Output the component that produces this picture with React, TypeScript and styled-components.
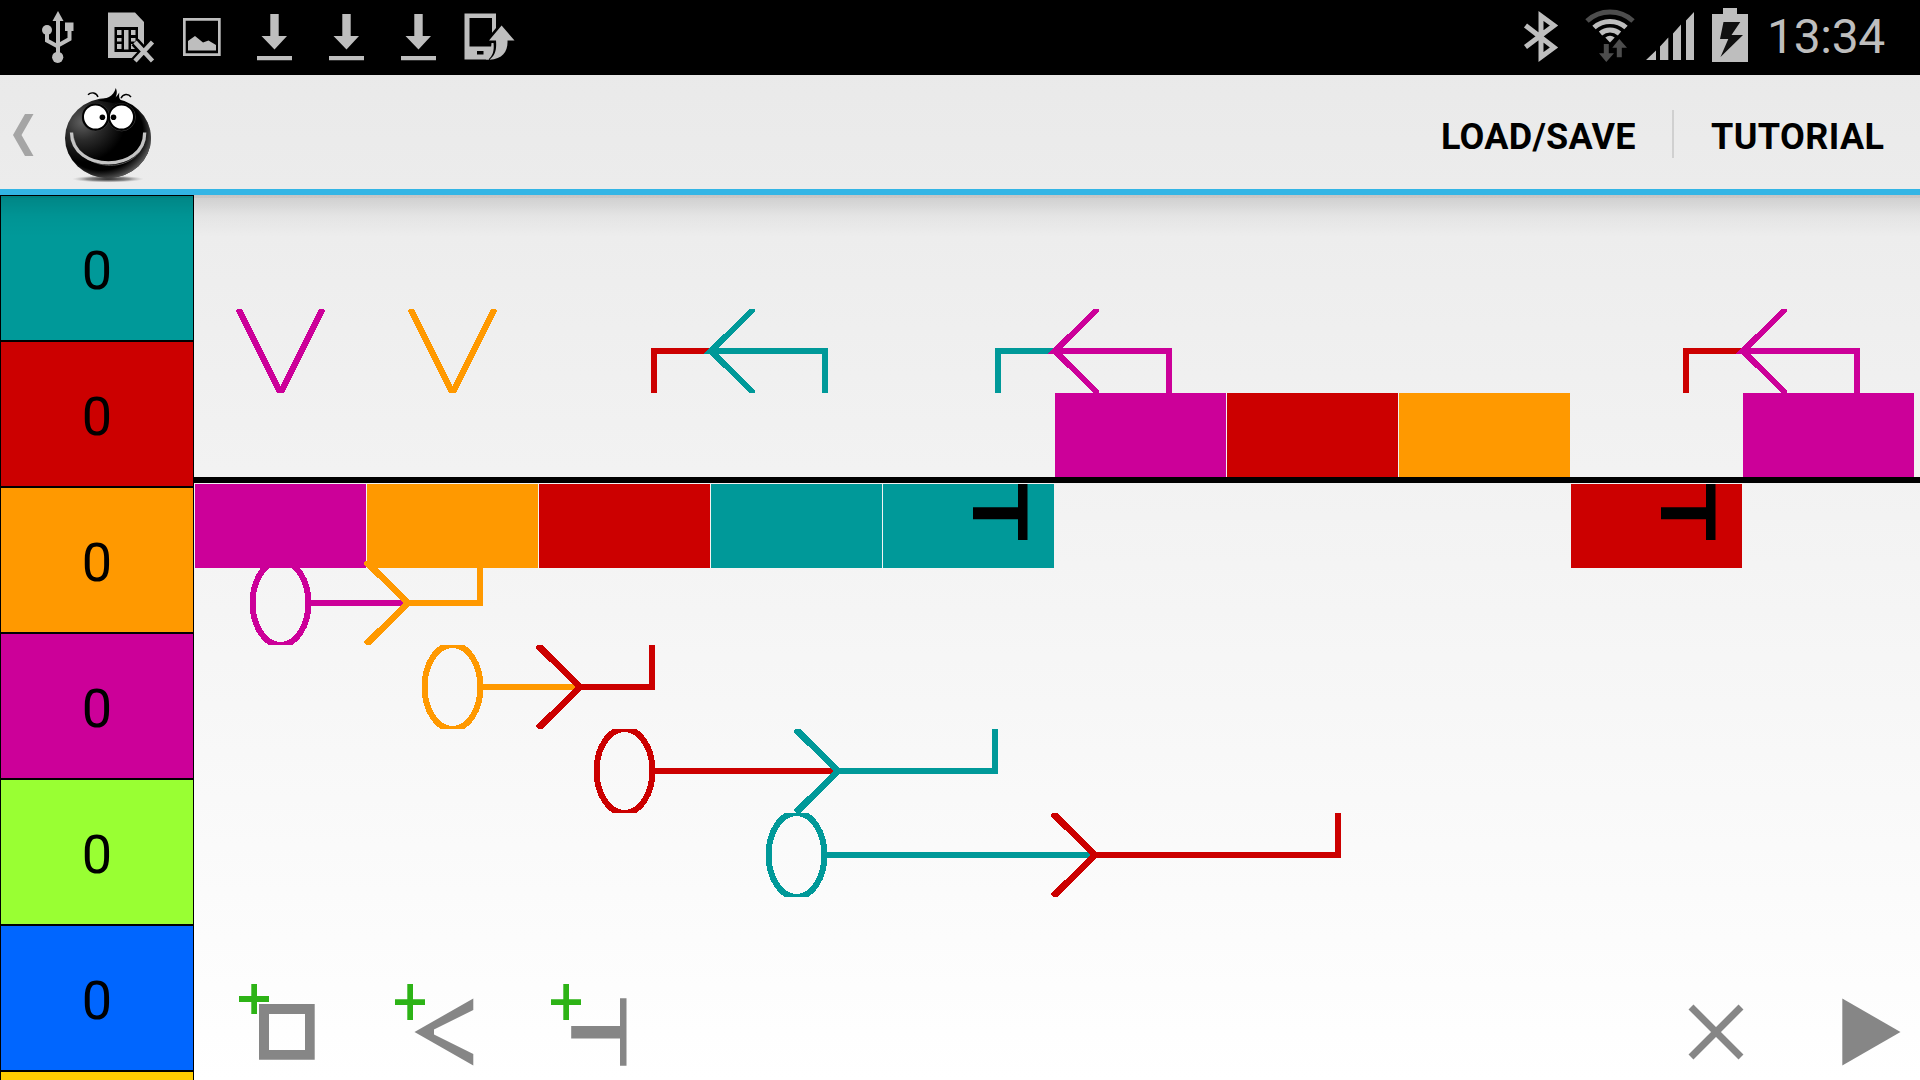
import React from "react";
import styled, { createGlobalStyle } from "styled-components";

const TEAL = "#009999";
const RED = "#cc0000";
const ORANGE = "#ff9900";
const MAGENTA = "#cc0099";
const LIME = "#99ff33";
const BLUE = "#0066ff";
const YELLOW = "#ffcc00";
const STATUS = "#bebebe";
const TOOL = "#868686";
const PLUS = "#2db316";

const GlobalStyle = createGlobalStyle`
  * { box-sizing: border-box; }
  body { margin: 0; overflow: hidden; }
  svg { display: block; flex: none; }
`;

const Screen = styled.div`
  width: 1920px;
  height: 1080px;
  display: flex;
  flex-direction: column;
  overflow: hidden;
  background: linear-gradient(#e8e8e8, #ffffff);
  font-family: Roboto, "Liberation Sans", sans-serif;
`;

const StatusBar = styled.header`
  height: 75px;
  flex: none;
  display: flex;
  justify-content: space-between;
  background: #000;
  color: ${STATUS};
`;

const StatusGroup = styled.div<{ $left?: number; $right?: number }>`
  display: flex;
  align-items: center;
  padding-left: ${(p) => p.$left ?? 0}px;
  padding-right: ${(p) => p.$right ?? 0}px;
`;

const Clock = styled.time`
  width: 120px;
  margin-left: 12px;
  font-size: 48px;
  line-height: 74px;
  height: 75px;
  white-space: nowrap;
  letter-spacing: -0.3px;
`;

const ActionBar = styled.nav`
  height: 120px;
  flex: none;
  display: flex;
  align-items: center;
  justify-content: space-between;
  border-bottom: 6px solid #33b5e5;
`;

const Home = styled.div`
  display: flex;
  height: 114px;
`;

const Menu = styled.div`
  display: flex;
  align-items: center;
  height: 114px;
  padding-bottom: 2px;
`;

const MenuItem = styled.button<{ $width: number; $track: number }>`
  width: ${(p) => p.$width}px;
  padding: 12px 0 0;
  border: 0;
  background: none;
  color: #000;
  font: 700 36px/48px Roboto, "Liberation Sans", sans-serif;
  letter-spacing: ${(p) => p.$track}px;
  text-align: left;
  white-space: nowrap;
`;

const Divider = styled.span`
  width: 2px;
  height: 48px;
  margin: 5px 37px 0 36px;
  background: #d0d0d0;
`;

const Body = styled.main`
  position: relative;
  flex: 1;
  min-height: 0;
  display: flex;
`;

const BarShadow = styled.div`
  position: absolute;
  inset: 0 0 auto 0;
  height: 42px;
  pointer-events: none;
  background:
    linear-gradient(rgba(0, 0, 0, 0.04), rgba(0, 0, 0, 0.04)) 0 0 / 100% 3px no-repeat,
    linear-gradient(rgba(0, 0, 0, 0.135), rgba(0, 0, 0, 0.035) 50%, transparent);
`;

const Palette = styled.aside`
  width: 194px;
  flex: none;
  overflow: hidden;
`;

const Swatch = styled.div<{ $color: string }>`
  height: 146px;
  display: flex;
  align-items: center;
  justify-content: center;
  padding-top: 5px;
  border: 1px solid #000;
  background: ${(p) => p.$color};
  color: #000;
  font-size: 54px;
  line-height: 64px;
`;

const Stage = styled.section`
  position: relative;
  flex: 1;
  display: flex;
  flex-direction: column;
  padding-top: 198px;
`;

const Track = styled.div`
  display: grid;
  grid-template-columns: repeat(10, 171px);
  column-gap: 1px;
  height: 84px;
  padding-left: 1px;
`;

const Block = styled.div<{ $col: number; $color: string }>`
  grid-column: ${(p) => p.$col};
  grid-row: 1;
  height: 84px;
  background: ${(p) => p.$color};
`;

const Axis = styled.div`
  height: 6px;
  margin-bottom: 1px;
  background: #000;
`;

const Connectors = styled.svg`
  position: absolute;
  left: 0;
  top: 0;
`;

const Toolbar = styled.footer`
  display: flex;
  justify-content: space-between;
  height: 96px;
  margin-top: auto;
  padding-left: 45px;
`;

const ToolGroup = styled.div`
  display: flex;
  gap: 60px;
`;

const Tool = styled.button`
  width: 96px;
  height: 96px;
  padding: 0;
  border: 0;
  background: none;
`;

const StatusIcon = ({ w = 72, children }: { w?: number; children: React.ReactNode }) => (
  <svg width={w} height={75} viewBox={`0 0 ${w} 75`} fill={STATUS}>
    {children}
  </svg>
);

const UsbIcon = () => (
  <StatusIcon>
    <path d="M36 11 41.5 21H30.5Z" />
    <path d="M36 19V56M25 31V40.5L36 46.5M47.5 29V39L36 45.5" fill="none" stroke={STATUS} strokeWidth="4" />
    <circle cx="25" cy="30" r="5" />
    <rect x="43" y="22.5" width="8.5" height="8.5" />
    <circle cx="35.7" cy="57.3" r="5.6" />
  </StatusIcon>
);

const SimIcon = () => (
  <StatusIcon>
    <path d="M14 12.5H41L50 22V58H14Z" />
    <path d="M20.5 27H44V52H20.5Z" fill="#000" />
    <path d="M23 30h4.5v5H23zM23 38h4.5v3.500H23zM23 44h4.500v5H23zM30 30h4.500v19.500H30zM37 30h4.500v5H37zM37 38h4.500v3.500H37zM37 44h4.500v5H37z" />
    <path d="M41 42 59 61.500M59 42 41 61.500" stroke="#000" strokeWidth="9.5" />
    <path d="M41 42 58.500 61M58.500 42 41 61" stroke={STATUS} strokeWidth="4.4" />
  </StatusIcon>
);

const PictureIcon = () => (
  <StatusIcon>
    <path fillRule="evenodd" d="M17 18H54.700V56H17ZM19.700 20.700V53.300H52V20.700Z" />
    <path d="M22 50.500V41L29 36 37 42.500 42.500 40.500 50 45V50.500Z" />
  </StatusIcon>
);

const DownloadIcon = () => (
  <StatusIcon>
    <path d="M32.300 14H40.700V36H49L36.500 49.500 23.500 36H32.300ZM19 56H54V60.200H19Z" />
  </StatusIcon>
);

const PhoneIcon = () => (
  <StatusIcon>
    <path fillRule="evenodd" d="M10.500 13.500H42V59.500H10.500ZM15.500 18V46.500H38V18ZM23 51V54.500H29.500V51Z" />
    <path d="M47 22 32 40V43H37.500V49L35 57 35 61H56Z" fill="#000" />
    <path d="M38.300 26V18H42V28Z" />
    <path d="M47.600 25.500 60.500 40.500H53.500C54 51 49 59 35.500 59.700 41 55.500 42.800 50 42 40.500H35Z" />
    <path d="M37.500 43H39.500C40.500 51 38.500 56 34.500 59.500H32V57C35.500 54 37 50 37.500 43Z" />
  </StatusIcon>
);

const BluetoothIcon = () => (
  <StatusIcon w={61}>
    <path d="M6.500 25.500 35 47.500 22 57V16L35 25.500 6.500 47" fill="none" stroke={STATUS} strokeWidth="5" />
  </StatusIcon>
);

const WifiIcon = () => (
  <StatusIcon w={64}>
    <g fill="none" strokeWidth="5">
      <path d="M7 21A34 34 0 0 1 53 21" stroke="#4d4d4d" />
      <path d="M14 27.500A24 24 0 0 1 46 27.500" stroke={STATUS} />
      <path d="M20.500 33.500A14.500 14.500 0 0 1 39.500 33.500" stroke={STATUS} />
    </g>
    <path d="M25.300 37.500Q30 34 34.700 37.500L30 42.500Z" />
    <path d="M23.800 44h5v9.300H34L26.300 62 19 53.300h4.800ZM36.800 57.300h5v-9.500H47L39.300 39 32.300 47.800h4.500Z" fill="#4d4d4d" />
  </StatusIcon>
);

const SignalIcon = () => (
  <StatusIcon w={61}>
    <path d="M2 60 12 50.500V60ZM16 60V46.500L24.300 37.500V60ZM29 60V33.500L37 24.500V60ZM42 60V20.500L50 12V60Z" />
  </StatusIcon>
);

const BatteryIcon = () => (
  <StatusIcon w={50}>
    <path d="M7 14H18V8H32V14H43V62H7Z" />
    <path d="M18.500 22H35.300L26.500 35H38L15.500 57 23.300 39H15Z" fill="#101010" />
  </StatusIcon>
);

const BackChevron = () => (
  <svg width="46" height="114" viewBox="0 75 46 114">
    <path d="M25 114H33.500L21.500 135 33.500 156H25L13 135Z" fill="#a5a5a5" />
  </svg>
);

const Logo = () => (
  <svg width="120" height="114" viewBox="46 75 120 114">
    <defs>
      <radialGradient id="ball" cx="0.2" cy="0.3" r="0.5">
        <stop offset="0" stopColor="#606060" />
        <stop offset="0.45" stopColor="#2b2b2b" />
        <stop offset="1" stopColor="#000" />
      </radialGradient>
      <radialGradient id="rim" cx="0.42" cy="0.42" r="0.62">
        <stop offset="0.78" stopColor="#555" stopOpacity="0" />
        <stop offset="1" stopColor="#666" />
      </radialGradient>
      <radialGradient id="floor">
        <stop offset="0" stopColor="#222" />
        <stop offset="0.6" stopColor="#777" stopOpacity="0.8" />
        <stop offset="1" stopColor="#bbb" stopOpacity="0" />
      </radialGradient>
    </defs>
    <ellipse cx="108" cy="179" rx="36" ry="3.600" fill="url(#floor)" />
    <ellipse cx="108" cy="138" rx="43" ry="40" fill="url(#ball)" />
    <ellipse cx="108" cy="138" rx="43" ry="40" fill="url(#rim)" />
    <path d="M98 100.500C106 98.500 113.500 97 115.800 88 117.500 92 116.800 94.500 115.600 97.500 117 96 118 94.500 119.200 92.500 119.300 95.500 118.500 98 121 100.500L113 103Z" />
    <path d="M88 94.800C91 91.500 96.500 92.500 98 97M121 98.300C123 93.500 128.500 93.500 131 97" fill="none" stroke="#000" strokeWidth="1.400" />
    <g fill="#fff" stroke="#000" strokeWidth="2">
      <circle cx="95.700" cy="117.200" r="13.700" fill="#000" stroke="#444" strokeWidth="0.800" />
      <circle cx="121.700" cy="117.200" r="13.700" fill="#000" stroke="#444" strokeWidth="0.800" />
      <circle cx="95.500" cy="117" r="12.500" />
      <circle cx="121.500" cy="117" r="12.500" />
    </g>
    <circle cx="102.400" cy="117.300" r="2.800" />
    <circle cx="113.500" cy="117.300" r="2.800" />
    <path d="M74 138C80 172 134 175 144 143" fill="none" stroke="#555" strokeWidth="1" />
    <path d="M71.500 132.500C72 173 145 173 144.700 132.500" fill="none" stroke="#c4c4c4" strokeWidth="3.300" />
  </svg>
);

/* Stage coordinates: column k starts at 1 + 172k, each lane is 84px high. */
const columnX = (k: number) => 1 + 172 * k;

const Descent = ({ k, color }: { k: number; color: string }) => {
  const x = columnX(k) + 85.5;
  return (
    <svg x={x - 50} y={114} width={100} height={84} overflow="hidden">
      <path d="M8 0 50 84M92 0 50 84" fill="none" stroke={color} strokeWidth={6} />
    </svg>
  );
};

const BackLoop = ({ k, from, to }: { k: number; from: string; to: string }) => (
  <g transform={`translate(${columnX(k)} 114)`}>
    <path d="M-60 84V39H0V45H-54V84Z" fill={from} />
    <path d="M0 39H117V84H111V45H0Z" fill={to} />
    <path
      d="M37.500 1 38.500 0H43.500L44.500 2 7.500 39V45L44.500 82 43.500 84H38.500L37.500 83 13 58.500 12 59 -1 45H-7.500L12 25 13 25.500Z"
      fill={to}
    />
  </g>
);

type JumpProps = { row: number; start: number; head: number; end: number; from: string; to: string };

const Jump = ({ row, start, head, end, from, to }: JumpProps) => (
  <svg x={0} y={366 + 84 * row} width={1726} height={84} overflow="hidden">
    <g fill="none" strokeWidth={6}>
      <ellipse cx={start} cy={42} rx={28} ry={42} stroke={from} />
      <path d={`M${start + 28} 42H${head + 40}`} stroke={from} />
      <path d={`M${head + 41} 42H${end}V0`} stroke={to} />
      <path d={`M${head} 0 ${head + 42} 42M${head} 84 ${head + 42} 42`} stroke={to} />
      <path d={`M${head} 1 ${head + 14} 15M${head} 83 ${head + 14} 69`} stroke={to} />
    </g>
  </svg>
);

const Inhibitor = ({ k }: { k: number }) => (
  <path
    transform={`translate(${columnX(k)} 289)`}
    d="M90 23.300H135V0H144.500V56H135V35.300H90Z"
    fill="#000"
    shapeRendering="auto"
  />
);

const palette: { color: string; count?: number }[] = [
  { color: TEAL, count: 0 },
  { color: RED, count: 0 },
  { color: ORANGE, count: 0 },
  { color: MAGENTA, count: 0 },
  { color: LIME, count: 0 },
  { color: BLUE, count: 0 },
  { color: YELLOW },
];

const upper: [number, string][] = [
  [6, MAGENTA],
  [7, RED],
  [8, ORANGE],
  [10, MAGENTA],
];

const lower: [number, string][] = [
  [1, MAGENTA],
  [2, ORANGE],
  [3, RED],
  [4, TEAL],
  [5, TEAL],
  [9, RED],
];

const jumps: JumpProps[] = [
  { row: 0, start: 86.5, head: 172, end: 286, from: MAGENTA, to: ORANGE },
  { row: 1, start: 258.5, head: 344, end: 458, from: ORANGE, to: RED },
  { row: 2, start: 430.5, head: 602, end: 801, from: RED, to: TEAL },
  { row: 3, start: 602.5, head: 859, end: 1144, from: TEAL, to: RED },
];

const ToolIcon = ({ children }: { children: React.ReactNode }) => (
  <svg width="96" height="96" viewBox="0 0 96 96" fill={TOOL}>
    {children}
  </svg>
);

export default function App() {
  return (
    <>
      <GlobalStyle />
      <Screen>
        <StatusBar>
          <StatusGroup $left={22}>
            <UsbIcon />
            <SimIcon />
            <PictureIcon />
            <DownloadIcon />
            <DownloadIcon />
            <DownloadIcon />
            <PhoneIcon />
          </StatusGroup>
          <StatusGroup $right={33}>
            <BluetoothIcon />
            <WifiIcon />
            <SignalIcon />
            <BatteryIcon />
            <Clock>13:34</Clock>
          </StatusGroup>
        </StatusBar>
        <ActionBar>
          <Home>
            <BackChevron />
            <Logo />
          </Home>
          <Menu>
            <MenuItem $width={195} $track={0.25}>LOAD/SAVE</MenuItem>
            <Divider />
            <MenuItem $width={209} $track={0.4}>TUTORIAL</MenuItem>
          </Menu>
        </ActionBar>
        <Body>
          <Palette>
            {palette.map(({ color, count }) => (
              <Swatch key={color} $color={color}>{count}</Swatch>
            ))}
          </Palette>
          <Stage>
            <Track>
              {upper.map(([col, color]) => (
                <Block key={col} $col={col} $color={color} />
              ))}
            </Track>
            <Axis />
            <Track>
              {lower.map(([col, color]) => (
                <Block key={col} $col={col} $color={color} />
              ))}
            </Track>
            <Connectors width="1726" height="885" shapeRendering="crispEdges">
              <Descent k={0} color={MAGENTA} />
              <Descent k={1} color={ORANGE} />
              <BackLoop k={3} from={RED} to={TEAL} />
              <BackLoop k={5} from={TEAL} to={MAGENTA} />
              <BackLoop k={9} from={RED} to={MAGENTA} />
              {jumps.map((j) => (
                <Jump key={j.row} {...j} />
              ))}
              <Inhibitor k={4} />
              <Inhibitor k={8} />
            </Connectors>
            <Toolbar>
              <ToolGroup>
                <Tool aria-label="Add block">
                  <ToolIcon>
                    <path fillRule="evenodd" d="M20 20H75.700V75.700H20ZM30 30V66H66V30Z" />
                    <path d="M12.300 0H18V12H30V18H18V30H12.300V18H0V12H12.300Z" fill={PLUS} />
                  </ToolIcon>
                </Tool>
                <Tool aria-label="Add branch">
                  <ToolIcon>
                    <path d="M78.300 14.500V26L39 45.500V50.500L78.300 70V81.500L19.500 48Z" />
                    <path d="M12.300 0H18V15.300H30V21H18V36H12.300V21H0V15.300H12.300Z" fill={PLUS} />
                  </ToolIcon>
                </Tool>
                <Tool aria-label="Add stop">
                  <ToolIcon>
                    <path d="M20.200 42H69V14.300H75.500V81.700H69V54.500H20.200Z" />
                    <path d="M12.300 0H18V15.300H30V21H18V36H12.300V21H0V15.300H12.300Z" fill={PLUS} />
                  </ToolIcon>
                </Tool>
              </ToolGroup>
              <ToolGroup>
                <Tool aria-label="Delete">
                  <ToolIcon>
                    <path d="M23 23 73 73M73 23 23 73" stroke={TOOL} strokeWidth="7" />
                  </ToolIcon>
                </Tool>
                <Tool aria-label="Run">
                  <ToolIcon>
                    <path d="M18.300 14.500 76.500 48 18.300 81.500Z" />
                  </ToolIcon>
                </Tool>
              </ToolGroup>
            </Toolbar>
          </Stage>
          <BarShadow />
        </Body>
      </Screen>
    </>
  );
}
